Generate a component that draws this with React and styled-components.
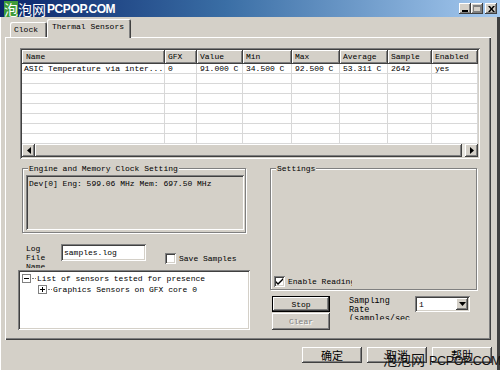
import React from "react";
import styled, { createGlobalStyle, css } from "styled-components";

const GlobalStyle = createGlobalStyle`
  html, body {
    margin: 0;
    padding: 0;
    background: #d4d0c8;
  }
  body {
    font-family: "Liberation Mono", "DejaVu Sans Mono", monospace;
    font-size: 8px;
    color: #000;
  }
`;

const raised = css`
  box-shadow: inset -1px -1px #404040, inset 1px 1px #fff,
    inset -2px -2px #808080, inset 2px 2px #d4d0c8;
`;

const sunken = css`
  box-shadow: inset 1px 1px #808080, inset -1px -1px #fff,
    inset 2px 2px #404040, inset -2px -2px #d4d0c8;
`;

const Window = styled.div`
  position: relative;
  width: 500px;
  height: 370px;
  background: #d4d0c8;
  display: flex;
  flex-direction: column;
  overflow: hidden;
  box-shadow: inset -3px 0 #404040, inset 1px 0 #fff;
`;

const TitleBar = styled.div`
  height: 17px;
  display: flex;
  align-items: center;
  justify-content: space-between;
  background: linear-gradient(90deg, #0a246a 0%, #3a6ea5 45%, #a6caf0 100%);
  padding: 0 3px 0 4px;
`;

const TitleText = styled.div`
  display: flex;
  align-items: center;
  color: #fff;
  height: 16px;
`;

const TitleCjk = styled.span`
  font-family: "Noto Sans CJK SC", sans-serif;
  font-size: 14px;
  line-height: 16px;
  background: ${(p) => (p.$green ? "#3e9b3a" : "transparent")};
`;

const TitleLatin = styled.span`
  font-family: "Liberation Sans", Arial, sans-serif;
  font-weight: bold;
  font-size: 12px;
  letter-spacing: -0.4px;
  margin-left: 1px;
`;

const CaptionButtons = styled.div`
  display: flex;
  align-items: center;
`;

const CaptionButton = styled.div`
  width: 12px;
  height: 11px;
  background: #d4d0c8;
  ${raised};
  display: flex;
  align-items: center;
  justify-content: center;
  margin-left: ${(p) => p.$gap || 0}px;
`;

const Body = styled.div`
  flex: 1;
  display: flex;
  flex-direction: column;
  padding: 2px 0 0 5px;
`;

const TabStrip = styled.div`
  height: 18px;
  display: flex;
  align-items: flex-end;
  padding-left: 5px;
`;

const Tab = styled.div`
  position: relative;
  z-index: ${(p) => (p.$active ? 1 : 0)};
  width: ${(p) => p.$w}px;
  box-sizing: border-box;
  height: ${(p) => (p.$active ? 19 : 15)}px;
  margin-bottom: ${(p) => (p.$active ? -1 : 0)}px;
  padding-left: ${(p) => (p.$active ? 5 : 4)}px;
  line-height: ${(p) => (p.$active ? 16 : 15)}px;
  background: #d4d0c8;
  border-radius: 2px 2px 0 0;
  box-shadow: inset 1px 1px #fff, inset -1px 0 #404040, inset -2px 0 #808080;
  white-space: nowrap;
`;

const TabPanel = styled.div`
  width: 486px;
  height: 303px;
  box-sizing: border-box;
  padding: 11px 0 0 13px;
  box-shadow: inset 1px 1px #fff, inset -1px -1px #404040,
    inset -2px -2px #808080;
  display: flex;
  flex-direction: column;
`;

const ListView = styled.div`
  margin-left: 2px;
  width: 460px;
  height: 111px;
  box-sizing: border-box;
  padding: 2px;
  background: #fff;
  ${sunken};
  display: flex;
  flex-direction: column;
`;

const columns = "143px 32px 46px 49px 48px 48px 44px 46px";

const HeaderRow = styled.div`
  display: grid;
  grid-template-columns: ${columns};
  height: 14px;
`;

const HeaderCell = styled.div`
  background: #d4d0c8;
  box-shadow: inset -1px -1px #404040, inset 1px 1px #fff,
    inset -2px -2px #808080;
  line-height: 14px;
  padding-left: ${(p) => (p.$first ? 4 : 3)}px;
  white-space: nowrap;
  overflow: hidden;
`;

const Rows = styled.div`
  height: 80px;
  overflow: hidden;
`;

const Row = styled.div`
  display: grid;
  grid-template-columns: ${columns};
  height: 10px;
`;

const Cell = styled.div`
  box-sizing: border-box;
  border-right: 1px solid #d8d8d8;
  border-bottom: 1px solid #d8d8d8;
  line-height: 10px;
  padding-left: ${(p) => (p.$first ? 2 : 3)}px;
  white-space: nowrap;
  overflow: hidden;
`;

const HScroll = styled.div`
  height: 13px;
  display: flex;
  background: #e8e6e0;
`;

const ScrollArrow = styled.div`
  width: 13px;
  height: 13px;
  background: #d4d0c8;
  ${raised};
  display: flex;
  align-items: center;
  justify-content: center;
`;

const ScrollThumb = styled.div`
  flex: 1;
  margin-right: 3px;
  background: #d4d0c8;
  ${raised};
`;

const MiddleRow = styled.div`
  display: flex;
  margin-top: 5px;
`;

const LeftColumn = styled.div`
  width: 234px;
  display: flex;
  flex-direction: column;
`;

const RightColumn = styled.div`
  width: 207px;
  margin-left: 18px;
  display: flex;
  flex-direction: column;
`;

const GroupBox = styled.fieldset`
  margin: 0 0 0 ${(p) => p.$indent || 0}px;
  width: ${(p) => p.$w}px;
  height: ${(p) => p.$h}px;
  box-sizing: border-box;
  min-width: 0;
  padding: 2px 1px 2px 3px;
  border: 1px solid #808080;
  box-shadow: inset 1px 1px #fff, 1px 1px #fff;
`;

const GroupLegend = styled.legend`
  padding: 0 1px;
  margin-left: 2px;
  line-height: 9px;
  background: #d4d0c8;
`;

const ReadOnlyBox = styled.div`
  height: 55px;
  box-sizing: border-box;
  padding: 4px 3px;
  ${sunken};
  white-space: nowrap;
`;

const SettingsBody = styled.div`
  height: 112px;
  display: flex;
  align-items: flex-end;
`;

const CheckRow = styled.label`
  display: flex;
  align-items: center;
  gap: 3px;
  height: 12px;
  white-space: nowrap;
  overflow: hidden;
  width: ${(p) => p.$w || "auto"};
`;

const CheckBox = styled.span`
  flex: none;
  width: 11px;
  height: 11px;
  box-sizing: border-box;
  background: #fff;
  ${sunken};
  display: flex;
  align-items: center;
  justify-content: center;
`;

const LogRow = styled.div`
  display: flex;
  align-items: flex-start;
  margin: 10px 0 0 8px;
  height: 25px;
`;

const FieldLabel = styled.div`
  width: 22px;
  height: 24px;
  padding-top: 1px;
  line-height: 9px;
  overflow: hidden;
`;

const TextInput = styled.div`
  margin: 1px 0 0 13px;
  width: 85px;
  height: 17px;
  box-sizing: border-box;
  padding: 0 3px;
  line-height: 17px;
  background: #fff;
  ${sunken};
`;

const SaveCheck = styled.div`
  margin: 9px 0 0 19px;
`;

const TreeBox = styled.div`
  margin-top: 2px;
  width: 232px;
  height: 60px;
  box-sizing: border-box;
  padding: 3px 4px;
  background: #fff;
  ${sunken};
`;

const TreeItem = styled.div`
  display: flex;
  align-items: center;
  height: 11px;
  padding-left: ${(p) => p.$level * 16}px;
  white-space: nowrap;
`;

const ExpandBox = styled.span`
  width: 9px;
  height: 9px;
  box-sizing: border-box;
  border: 1px solid #808080;
  background: #fff;
  display: flex;
  align-items: center;
  justify-content: center;
`;

const Connector = styled.span`
  width: 4px;
  margin: 0 1px;
  border-top: 1px dotted #808080;
`;

const ControlRow = styled.div`
  display: flex;
  align-items: flex-start;
  margin-top: 6px;
  padding-left: 2px;
`;

const ButtonStack = styled.div`
  display: flex;
  flex-direction: column;
  gap: 1px;
`;

const Button = styled.div`
  width: ${(p) => p.$w}px;
  height: ${(p) => p.$h}px;
  box-sizing: border-box;
  background: #d4d0c8;
  display: flex;
  align-items: center;
  justify-content: center;
  ${(p) =>
    p.$default
      ? css`
          box-shadow: inset 0 0 0 1px #000, inset -2px -2px #404040,
            inset 2px 2px #fff, inset -3px -3px #808080;
        `
      : raised};
  ${(p) =>
    p.$disabled &&
    css`
      color: #808080;
      text-shadow: 1px 1px #fff;
    `};
  ${(p) =>
    p.$cjk &&
    css`
      font-family: "Noto Sans CJK SC", sans-serif;
      font-size: 11px;
    `};
`;

const SamplingLabel = styled.div`
  margin: 1px 0 0 19px;
  width: 62px;
  height: 23px;
  line-height: 9px;
  font-size: 8.5px;
  overflow: hidden;
  white-space: nowrap;
`;

const Select = styled.div`
  margin-left: 4px;
  width: 55px;
  height: 16px;
  box-sizing: border-box;
  padding: 2px;
  background: #fff;
  ${sunken};
  display: flex;
  align-items: center;
  justify-content: space-between;
`;

const SelectValue = styled.span`
  padding-left: 2px;
`;

const SelectArrow = styled.div`
  width: 12px;
  height: 12px;
  background: #d4d0c8;
  ${raised};
  display: flex;
  align-items: center;
  justify-content: center;
`;

const Footer = styled.div`
  display: flex;
  justify-content: flex-end;
  gap: 5px;
  margin-top: 7px;
  padding-right: 8px;
`;

const Watermark = styled.div`
  position: absolute;
  left: 383px;
  top: 350px;
  display: flex;
  align-items: baseline;
  color: #111;
  white-space: nowrap;
`;

const WatermarkCjk = styled.span`
  font-family: "Noto Sans CJK SC", sans-serif;
  font-size: 14px;
  line-height: 18px;
`;

const WatermarkLatin = styled.span`
  font-family: "Liberation Sans", Arial, sans-serif;
  font-size: 12.5px;
  letter-spacing: -0.3px;
  margin-left: 4px;
`;

const Check = () => (
  <svg width="7" height="7" viewBox="0 0 7 7">
    <path d="M0 3 L2 5 L7 0 L7 2 L2 7 L0 5 Z" fill="#000" />
  </svg>
);

const Triangle = ({ dir }) => {
  const d =
    dir === "left"
      ? "M4 0 L0 3.5 L4 7 Z"
      : dir === "right"
      ? "M0 0 L4 3.5 L0 7 Z"
      : "M0 0 L7 0 L3.5 4 Z";
  const w = dir === "down" ? 7 : 4;
  const h = dir === "down" ? 4 : 7;
  return (
    <svg width={w} height={h} viewBox={`0 0 ${w} ${h}`}>
      <path d={d} fill="#000" />
    </svg>
  );
};

const headers = ["Name", "GFX", "Value", "Min", "Max", "Average", "Sample", "Enabled"];
const data = [
  ["ASIC Temperature via inter...", "0", "91.000 C", "34.500 C", "92.500 C", "53.311 C", "2642", "yes"],
  ...Array.from({ length: 7 }, () => Array(8).fill("")),
];

export default function App() {
  return (
    <>
      <GlobalStyle />
      <Window>
        <TitleBar>
          <TitleText>
            <TitleCjk $green>泡</TitleCjk>
            <TitleCjk>泡网</TitleCjk>
            <TitleLatin>PCPOP.COM</TitleLatin>
          </TitleText>
          <CaptionButtons>
            <CaptionButton>
              <svg width="6" height="6" viewBox="0 0 6 6">
                <rect x="0" y="4" width="6" height="2" fill="#000" />
              </svg>
            </CaptionButton>
            <CaptionButton>
              <svg width="8" height="7" viewBox="0 0 8 7">
                <rect x="0.5" y="0.5" width="7" height="6" fill="none" stroke="#808080" />
                <rect x="0" y="0" width="8" height="2" fill="#808080" />
              </svg>
            </CaptionButton>
            <CaptionButton $gap={2}>
              <svg width="7" height="6" viewBox="0 0 7 6">
                <path d="M0 0 L2 0 L3.5 2 L5 0 L7 0 L4.5 3 L7 6 L5 6 L3.5 4 L2 6 L0 6 L2.5 3 Z" fill="#000" />
              </svg>
            </CaptionButton>
          </CaptionButtons>
        </TitleBar>

        <Body>
          <TabStrip>
            <Tab $w={37}>Clock</Tab>
            <Tab $w={84} $active>
              Thermal Sensors
            </Tab>
          </TabStrip>

          <TabPanel>
            <ListView>
              <HeaderRow>
                {headers.map((h, i) => (
                  <HeaderCell key={h} $first={i === 0}>
                    {h}
                  </HeaderCell>
                ))}
              </HeaderRow>
              <Rows>
                {data.map((row, r) => (
                  <Row key={r}>
                    {row.map((c, i) => (
                      <Cell key={i} $first={i === 0}>
                        {c}
                      </Cell>
                    ))}
                  </Row>
                ))}
              </Rows>
              <HScroll>
                <ScrollArrow>
                  <Triangle dir="left" />
                </ScrollArrow>
                <ScrollThumb />
                <ScrollArrow>
                  <Triangle dir="right" />
                </ScrollArrow>
              </HScroll>
            </ListView>

            <MiddleRow>
              <LeftColumn>
                <GroupBox $indent={4} $w={224} $h={69}>
                  <GroupLegend>Engine and Memory Clock Setting</GroupLegend>
                  <ReadOnlyBox>Dev[0] Eng: 599.06 MHz Mem: 697.50 MHz</ReadOnlyBox>
                </GroupBox>

                <LogRow>
                  <FieldLabel>Log File Name</FieldLabel>
                  <TextInput>samples.log</TextInput>
                  <SaveCheck>
                    <CheckRow>
                      <CheckBox />
                      Save Samples
                    </CheckRow>
                  </SaveCheck>
                </LogRow>

                <TreeBox>
                  <TreeItem $level={0}>
                    <ExpandBox>
                      <svg width="5" height="5" viewBox="0 0 5 5">
                        <rect x="0" y="2" width="5" height="1" fill="#000" />
                      </svg>
                    </ExpandBox>
                    <Connector />
                    List of sensors tested for presence
                  </TreeItem>
                  <TreeItem $level={1}>
                    <ExpandBox>
                      <svg width="5" height="5" viewBox="0 0 5 5">
                        <rect x="0" y="2" width="5" height="1" fill="#000" />
                        <rect x="2" y="0" width="1" height="5" fill="#000" />
                      </svg>
                    </ExpandBox>
                    <Connector />
                    Graphics Sensors on GFX core 0
                  </TreeItem>
                </TreeBox>
              </LeftColumn>

              <RightColumn>
                <GroupBox $w={207} $h={126}>
                  <GroupLegend>Settings</GroupLegend>
                  <SettingsBody>
                    <CheckRow $w="78px">
                      <CheckBox>
                        <Check />
                      </CheckBox>
                      Enable Readings
                    </CheckRow>
                  </SettingsBody>
                </GroupBox>

                <ControlRow>
                  <ButtonStack>
                    <Button $w={58} $h={16} $default>
                      Stop
                    </Button>
                    <Button $w={58} $h={17} $disabled>
                      Clear
                    </Button>
                  </ButtonStack>
                  <SamplingLabel>
                    Sampling
                    <br />
                    Rate
                    <br />
                    (samples/sec)
                  </SamplingLabel>
                  <Select>
                    <SelectValue>1</SelectValue>
                    <SelectArrow>
                      <Triangle dir="down" />
                    </SelectArrow>
                  </Select>
                </ControlRow>
              </RightColumn>
            </MiddleRow>
          </TabPanel>

          <Footer>
            <Button $w={60} $h={16} $cjk>
              确定
            </Button>
            <Button $w={60} $h={16} $cjk>
              取消
            </Button>
            <Button $w={60} $h={16} $cjk>
              帮助
            </Button>
          </Footer>
        </Body>

        <Watermark>
          <WatermarkCjk>泡泡网</WatermarkCjk>
          <WatermarkLatin>PCPOP.COM</WatermarkLatin>
        </Watermark>
      </Window>
    </>
  );
}
